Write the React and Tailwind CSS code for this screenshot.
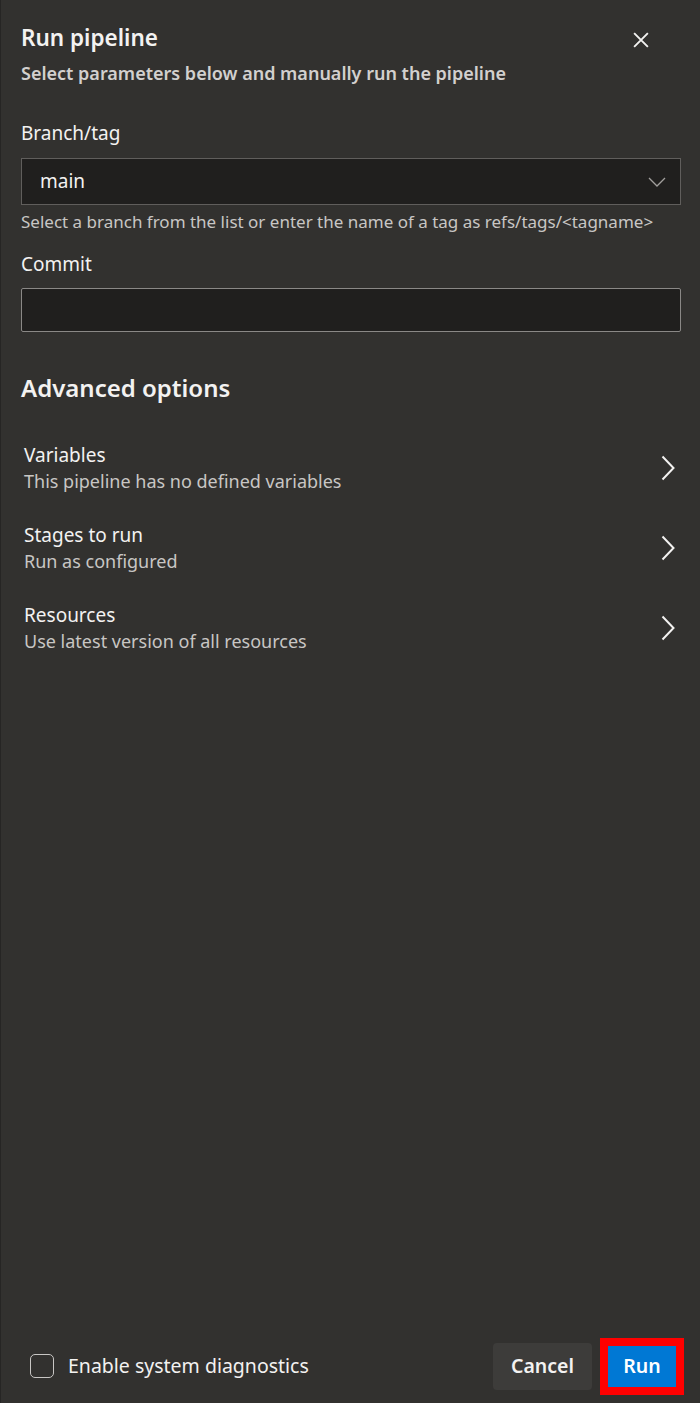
import React, { useState } from "react";

const font = { fontFamily: '"Noto Sans", "Open Sans", sans-serif' };

const options = [
  { name: "Variables", desc: "This pipeline has no defined variables" },
  { name: "Stages to run", desc: "Run as configured" },
  { name: "Resources", desc: "Use latest version of all resources" },
];

const Chevron = ({ className }) => (
  <svg viewBox="0 0 16 28" className={className} fill="none" stroke="currentColor" strokeWidth="2">
    <path d="M2.5 2.5 L13.5 14 L2.5 25.5" />
  </svg>
);

const App = () => {
  const [diag, setDiag] = useState(false);

  return (
    <div
      className="h-[1403px] w-[700px] bg-[#32312f] border-l border-[#262524] flex flex-col text-[#f3f2f1]"
      style={font}
    >
      <div className="pl-[20px] pr-[19px] pt-[24px] flex-1 flex flex-col">
        <div className="flex items-start justify-between">
          <div>
            <h1 className="text-[22.5px] leading-[28px] font-semibold">Run pipeline</h1>
            <p className="mt-[9px] text-[18px] leading-[24px] font-semibold text-[#d2d0ce]">
              Select parameters below and manually run the pipeline
            </p>
          </div>
          <button className="mt-[6px] mr-[30px] text-[#f3f2f1]">
            <svg viewBox="0 0 16 16" className="w-[20px] h-[20px]" stroke="currentColor" strokeWidth="1.5">
              <path d="M2.5 2.5 L13.5 13.5 M13.5 2.5 L2.5 13.5" />
            </svg>
          </button>
        </div>

        <label className="mt-[36px] text-[19px] leading-[24px] text-[#f3f2f1]">Branch/tag</label>
        <div className="mt-[13px] h-[47px] bg-[#201f1e] border border-[#605e5c] flex items-center justify-between pl-[18px] pr-[14px]">
          <span className="text-[19px] text-[#f3f2f1]">main</span>
          <svg viewBox="0 0 18 10" className="w-[18px] h-[10px] text-[#a19f9d]" fill="none" stroke="currentColor" strokeWidth="1.3">
            <path d="M1 1 L9 9 L17 1" />
          </svg>
        </div>
        <p className="mt-[6px] text-[17px] leading-[22px] text-[#c8c6c4] whitespace-nowrap">
          Select a branch from the list or enter the name of a tag as refs/tags/&lt;tagname&gt;
        </p>

        <label className="mt-[19px] text-[19px] leading-[24px] text-[#f3f2f1]">Commit</label>
        <input
          className="mt-[12px] h-[44px] bg-[#201f1e] border border-[#8a8886] rounded-[2px] px-[18px] text-[18px] text-[#f3f2f1] outline-none"
          style={font}
        />

        <h2 className="mt-[41px] text-[24px] leading-[30px] font-semibold">Advanced options</h2>

        <div className="mt-[40px] flex flex-col gap-[30px]">
          {options.map((o) => (
            <div key={o.name} className="flex items-center justify-between pl-[3px] pr-[5px]">
              <div>
                <div className="text-[19px] leading-[24px] text-[#f3f2f1]">{o.name}</div>
                <div className="mt-[2px] text-[18px] leading-[24px] text-[#c8c6c4]">{o.desc}</div>
              </div>
              <Chevron className="w-[16px] h-[28px] text-[#f3f2f1]" />
            </div>
          ))}
        </div>
      </div>

      <div className="h-[80px] flex items-center justify-between pl-[29px] pr-[16px] pt-[6px]">
        <label className="flex items-center gap-[14px] cursor-pointer">
          <button
            onClick={() => setDiag(!diag)}
            className="w-[24px] h-[24px] rounded-[5px] border border-[#c8c6c4]"
          />
          <span className="text-[19.5px] text-[#f3f2f1]">Enable system diagnostics</span>
        </label>
        <div className="flex items-center gap-[8px]">
          <button className="w-[99px] h-[47px] rounded-[4px] bg-[#3d3c3a] text-[19.5px] font-semibold text-[#f3f2f1]">
            Cancel
          </button>
          <div className="border-[8px] border-[#ff0000]">
            <button className="w-[68px] h-[41px] bg-[#0078d4] text-[19.5px] font-semibold text-white">
              Run
            </button>
          </div>
        </div>
      </div>
    </div>
  );
};

export default App;
